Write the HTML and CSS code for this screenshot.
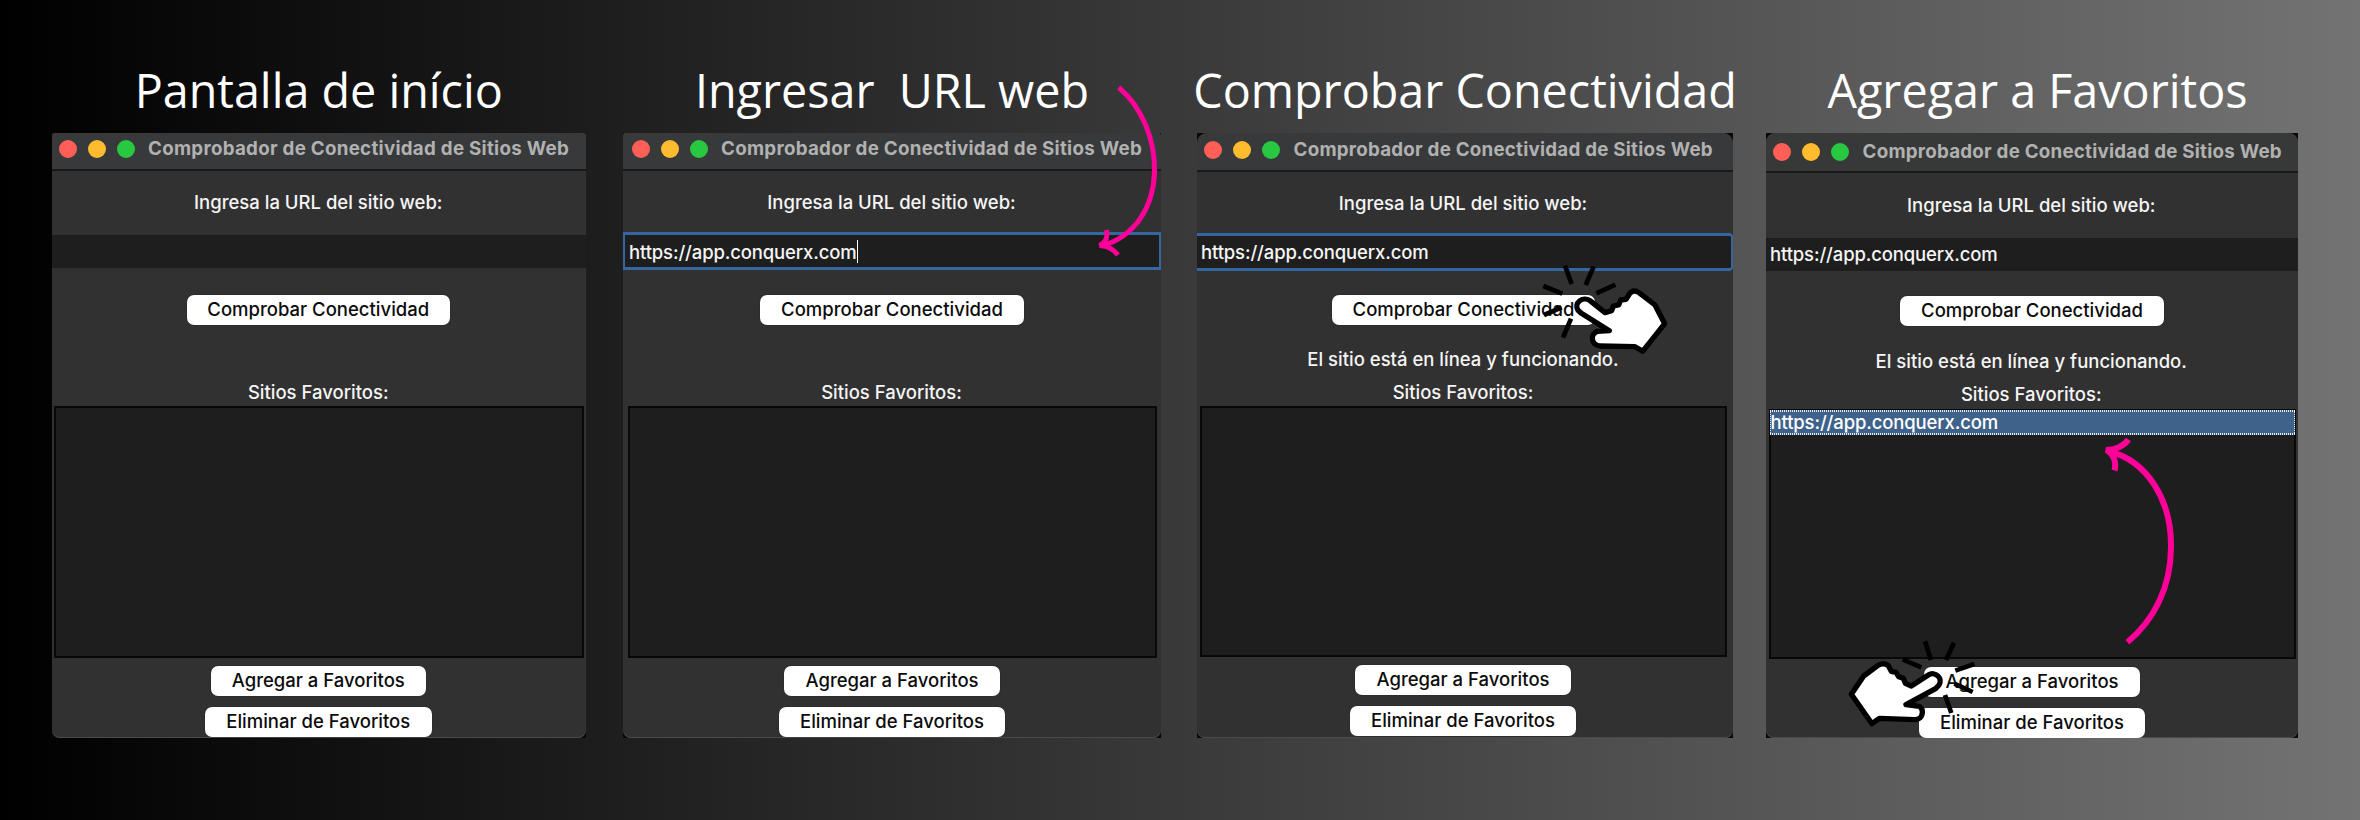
FILE: index.html
```html
<!DOCTYPE html>
<html lang="es">
<head>
<meta charset="utf-8">
<title>Comprobador de Conectividad de Sitios Web</title>
<link rel="stylesheet" href="styles.css">
</head>
<body>
<main class="board">
  <section class="step step-1">
    <h2 class="heading"><span>Pantalla de início</span></h2>
    <div class="frame"><div class="window">
      <header class="titlebar"><i class="dot red"></i><i class="dot yellow"></i><i class="dot green"></i><span class="title">Comprobador de Conectividad de Sitios Web</span></header>
      <label class="prompt">Ingresa la URL del sitio web:</label>
      <div class="entry"></div>
      <button class="btn check">Comprobar Conectividad</button>
      <p class="status"></p>
      <p class="favs">Sitios Favoritos:</p>
      <div class="list"></div>
      <button class="btn add">Agregar a Favoritos</button>
      <button class="btn remove">Eliminar de Favoritos</button>
    </div></div>
  </section>
  <section class="step step-2">
    <h2 class="heading"><span>Ingresar&nbsp; URL web</span></h2>
    <div class="frame"><div class="window">
      <header class="titlebar"><i class="dot red"></i><i class="dot yellow"></i><i class="dot green"></i><span class="title">Comprobador de Conectividad de Sitios Web</span></header>
      <label class="prompt">Ingresa la URL del sitio web:</label>
      <div class="entry focused">https://app.conquerx.com<i class="caret"></i></div>
      <button class="btn check">Comprobar Conectividad</button>
      <p class="status"></p>
      <p class="favs">Sitios Favoritos:</p>
      <div class="list"></div>
      <button class="btn add">Agregar a Favoritos</button>
      <button class="btn remove">Eliminar de Favoritos</button>
    </div></div>
  </section>
  <section class="step step-3">
    <h2 class="heading"><span>Comprobar Conectividad</span></h2>
    <div class="frame"><div class="window">
      <header class="titlebar"><i class="dot red"></i><i class="dot yellow"></i><i class="dot green"></i><span class="title">Comprobador de Conectividad de Sitios Web</span></header>
      <label class="prompt">Ingresa la URL del sitio web:</label>
      <div class="entry focused">https://app.conquerx.com</div>
      <button class="btn check">Comprobar Conectividad</button>
      <p class="status">El sitio está en línea y funcionando.</p>
      <p class="favs">Sitios Favoritos:</p>
      <div class="list"></div>
      <button class="btn add">Agregar a Favoritos</button>
      <button class="btn remove">Eliminar de Favoritos</button>
    </div></div>
  </section>
  <section class="step step-4">
    <h2 class="heading"><span>Agregar a Favoritos</span></h2>
    <div class="frame"><div class="window">
      <header class="titlebar"><i class="dot red"></i><i class="dot yellow"></i><i class="dot green"></i><span class="title">Comprobador de Conectividad de Sitios Web</span></header>
      <label class="prompt">Ingresa la URL del sitio web:</label>
      <div class="entry">https://app.conquerx.com</div>
      <button class="btn check">Comprobar Conectividad</button>
      <p class="status">El sitio está en línea y funcionando.</p>
      <p class="favs">Sitios Favoritos:</p>
      <div class="list"><div class="item">https://app.conquerx.com</div></div>
      <button class="btn add">Agregar a Favoritos</button>
      <button class="btn remove">Eliminar de Favoritos</button>
    </div></div>
  </section>

  <svg class="marks" viewBox="0 0 2360 820" aria-hidden="true">
    <g class="arrow">
      <path d="M1118.7 87.3C1142 107 1155.500 140 1154.500 173C1153 208 1135 236 1102 246"/>
      <path d="M1106.500 230C1108 239 1105 243 1099.500 245.500C1106 245.500 1113 249 1118 255"/>
    </g>
    <g class="arrow thick">
      <path d="M2127.400 642.300C2153 621 2171.500 588 2171 545C2171 502 2149 461 2108 451"/>
      <path d="M2128.500 439.500C2124 446 2115 450 2106 450C2113 453 2117 462 2114.400 470.500"/>
    </g>
    <g transform="translate(1520 250) scale(.33333)">
      <path class="rays" d="M135 47L155 102M221 50L197 105M70 108L127 131M286 104L229 130M72 195L125 172M153 206L129 263"/>
      <path class="hand" d="M255 188L210 152C188 137 160 160 174 181L184 190L268 242L232 244C212 250 210 282 238 288L345 290L368 304L434 221L405 165L357 128Q340 116 328 132L318 148L302 150L296 165L280 168L275 182Z"/>
    </g>
    <g transform="translate(1830 620) scale(.33333)">
      <path class="rays" d="M285 64L303 120M372 68L348 120M218 118L274 142M433 132L376 152M373 191L428 216M345 225L364 279"/>
      <path class="hand" d="M244 198L295 165C315 152 340 175 327 195L318 205L228 254L268 259C284 270 278 299 255 299L148 295L126 311L64 223L101 168L143 137Q160 125 175 137L184 154L198 157L206 170L220 175L226 190Z"/>
    </g>
  </svg>
</main>
</body>
</html>
```
FILE: styles.css
```css
* { box-sizing: border-box; }
body { margin: 0; }

.board {
  position: relative;
  width: 2360px;
  height: 820px;
  display: flex;
  align-items: flex-start;
  padding-left: 51.5px;
  overflow: hidden;
  background: linear-gradient(90deg, #000, #737373);
  color: #f5f5f5;
  font: 450 18.5px/24px Inter, "Liberation Sans", sans-serif;
  white-space: nowrap;
}

.step { flex: none; padding-top: 57px; }
.step-1 { width: 534.5px; --head: 0px; --dots: 7px; }
.step-2 { width: 538px; margin-left: 37px; --head: 0px; --dots: 8.5px; }
.step-3 { width: 536px; margin-left: 36px; --bar: 39px; --dots: 7px; --radius: 10px; --listh: 251px; --check: 23px; }
.step-4 { width: 532px; margin-left: 33px; --bar: 40px; --prompt: 62px; --dots: 7px; --head: 11px; --radius: 9px; --listh: 250px; --check: 22px; --gap: 2px; }

.heading {
  display: flex;
  justify-content: center;
  margin: 0;
  height: 76px;
  padding-left: var(--head, 0);
  font: 400 46.7px/66px "Open Sans", sans-serif;
  color: #fff;
}

.frame { background: #0b0908; height: 605px; }
.window {
  display: flex;
  flex-direction: column;
  align-items: center;
  height: 100%;
  background: #313131;
  border-radius: var(--radius, 3px) var(--radius, 3px) 8px 8px;
  box-shadow: inset 0 -1px 0 #4a4a4a;
  overflow: hidden;
}

.titlebar {
  align-self: stretch;
  flex: none;
  display: flex;
  align-items: center;
  height: var(--bar, 38px);
  padding: 0 0 5px var(--dots);
  background: #38393a;
  border-bottom: 2px solid #191919;
}
.step-3 .titlebar { padding-bottom: 4px; }
.step-4 .titlebar { padding-bottom: 1px; background: #373938; }
.dot { flex: none; width: 18px; height: 18px; border-radius: 50%; margin-right: 11.2px; }
.red { background: #ff5f57; }
.yellow { background: #febc2e; }
.green { background: #28c840; }
.title { margin-left: 2px; font-weight: 700; font-size: 18.75px; letter-spacing: .27px; color: #b1b1b1; }
.step-3 .title, .step-4 .title { letter-spacing: .23px; }

.prompt { flex: none; height: var(--prompt, 61px); padding-top: 19px; }
.step-4 .prompt { padding-top: 20px; }
.entry {
  align-self: stretch;
  flex: none;
  display: flex;
  align-items: center;
  height: 39px;
  padding: 0 4px;
  border: solid transparent;
  border-width: 3px 0;
  background: #1e1e1e;
  background-clip: padding-box;
  letter-spacing: -.14px;
}
.step-4 .entry { padding-bottom: 1px; }
.entry.focused { height: 38px; margin-bottom: 1px; border: solid #35669f; border-width: 3px 2px; }
.step-2 .entry.focused { padding-top: 1px; }
.step-3 .entry.focused { border-left: 0; border-radius: 0 4px 4px 0; }
.caret { width: 1.5px; height: 23px; background: #fff; }

.btn {
  flex: none;
  height: 30px;
  padding: 0 0 1px;
  border: 0;
  border-radius: 7px;
  background: #fff;
  color: #0c0c0c;
  font: inherit;
  line-height: 27px;
  box-shadow: 0 0 1px #000;
}
.check { width: 263.5px; margin-top: var(--check, 24px); }
.status { flex: none; margin: 22px 0 0; height: 24px; }
.step-4 .status { margin-top: 23px; }
.favs { flex: none; margin: 9px 0 var(--gap, 1px); height: 24px; }
.list {
  flex: none;
  align-self: stretch;
  height: var(--listh, 252px);
  margin: 1px 2.5px 0;
  border: 2px solid #080808;
  background: #1e1e1e;
}
.step-2 .list { margin-left: 4.5px; margin-right: 4px; }
.step-3 .list { margin-left: 3px; margin-right: 6px; }
.item {
  height: 25px;
  margin: -1px;
  padding-left: 1px;
  line-height: 25px;
  letter-spacing: -.14px;
  color: #fff;
  background:
    repeating-linear-gradient(90deg, #e6ebf0 0 1px, #3f628b 1px 2px) top / 100% 2px no-repeat,
    repeating-linear-gradient(90deg, #e6ebf0 0 1px, #3f628b 1px 2px) bottom / 100% 2px no-repeat,
    repeating-linear-gradient(0deg, #e6ebf0 0 1px, #3f628b 1px 2px) left / 1px 100% no-repeat,
    repeating-linear-gradient(0deg, #e6ebf0 0 1px, #3f628b 1px 2px) right / 1px 100% no-repeat,
    #3f628b;
}
.add { width: 215.5px; margin-top: 8px; }
.remove { width: 226.5px; margin-top: 11px; }
.step-1 .prompt, .step-1 .favs, .step-1 .btn,
.step-2 .prompt, .step-2 .favs { margin-right: 1px; }
.step-4 .prompt, .step-4 .status, .step-4 .favs { margin-right: 1.5px; }
.step-3 .prompt, .step-3 .status, .step-3 .favs, .step-3 .add, .step-3 .remove { margin-right: 4px; }
.step-3 .check { margin-right: 3px; }

.marks { position: absolute; inset: 0; width: 2360px; height: 820px; }
.arrow { fill: none; stroke: #ff0099; stroke-width: 5; stroke-linejoin: bevel; }
.thick { stroke-width: 6; }
.rays { fill: none; stroke: #000; stroke-width: 14; }
.hand { fill: #fff; stroke: #000; stroke-width: 16; stroke-linejoin: round; }
```
